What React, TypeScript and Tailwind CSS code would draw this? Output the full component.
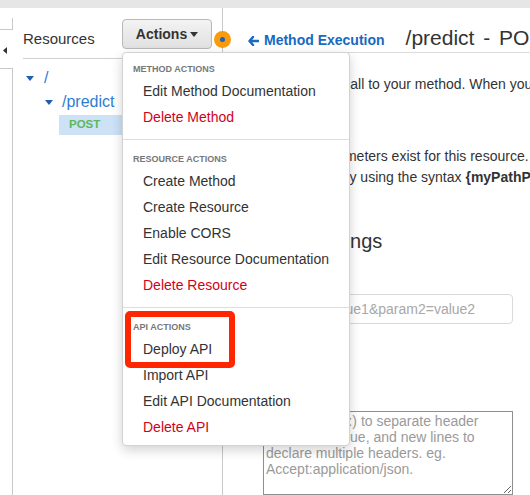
import React from "react";

const font = "font-['Liberation_Sans',Arial,Helvetica,sans-serif]";

interface MenuSection {
  title: string;
  items: { label: string; danger?: boolean }[];
  pad: string;
}

const sections: MenuSection[] = [
  {
    title: "Method Actions",
    pad: "pt-[10px] pb-[9px]",
    items: [{ label: "Edit Method Documentation" }, { label: "Delete Method", danger: true }],
  },
  {
    title: "Resource Actions",
    pad: "pt-[13px] pb-[9px] border-t border-[#dedede]",
    items: [
      { label: "Create Method" },
      { label: "Create Resource" },
      { label: "Enable CORS" },
      { label: "Edit Resource Documentation" },
      { label: "Delete Resource", danger: true },
    ],
  },
  {
    title: "API Actions",
    pad: "pt-[13px] pb-[5px] border-t border-[#dedede]",
    items: [
      { label: "Deploy API" },
      { label: "Import API" },
      { label: "Edit API Documentation" },
      { label: "Delete API", danger: true },
    ],
  },
];

function Caret({ className = "" }: { className?: string }) {
  return (
    <svg width="8" height="5" viewBox="0 0 8 5" className={className}>
      <path d="M0 0h8L4 5z" fill="currentColor" />
    </svg>
  );
}

function ActionsMenu() {
  return (
    <div className="absolute left-[122px] top-[52px] w-[228px] rounded-[4px] border border-[#d2d2d2] bg-white shadow-[0_4px_12px_rgba(0,0,0,0.18)]">
      {sections.map((s) => (
        <div key={s.title} className={s.pad}>
          <div className="mb-[3px] pl-[10px] text-[9px] font-bold uppercase leading-[12px] text-[#777]">
            {s.title}
          </div>
          {s.items.map((it) => (
            <div
              key={it.label}
              className={`flex h-[26px] items-center pl-[20px] text-[14px] ${
                it.danger ? "text-[#d0021b]" : "text-[#333]"
              }`}
            >
              {it.label}
            </div>
          ))}
        </div>
      ))}
    </div>
  );
}

export default function App() {
  return (
    <div className={`relative h-[495px] w-[530px] overflow-hidden bg-white text-[#333] ${font}`}>
      <div className="h-[8px] bg-[#e6e6e6]" />
      <div className="flex h-[487px]">
        {/* collapsed side rail */}
        <div className="flex w-[13px] shrink-0 flex-col">
          <div className="mt-[10px] h-[12px] border-r border-b border-[#c8c8c8]" />
          <div className="flex h-[38px] items-center pl-[3px] pt-[3px] text-[#333]">
            <svg width="4" height="7" viewBox="0 0 4 7">
              <path d="M4 0v7L0 3.5z" fill="currentColor" />
            </svg>
          </div>
          <div className="flex-1 border-r border-t border-[#c8c8c8]" />
        </div>

        {/* resources tree */}
        <div className="flex w-[210px] shrink-0 flex-col border-r border-[#c8c8c8]">
          <div className="ml-[10px] flex h-[51px] items-start justify-between border-b border-[#d0d0d0]">
            <span className="mt-[22px] text-[15px] leading-[18px]">Resources</span>
            <button className="mr-[10px] mt-[11px] flex h-[30px] w-[90px] items-center justify-center gap-[3px] rounded-[4px] border border-[#b8b8b8] bg-linear-to-b from-[#f3f3f3] to-[#e1e1e1] text-[14px] font-bold text-[#333]">
              Actions
              <Caret className="mt-[1px]" />
            </button>
          </div>
          <div className="pl-[13px] pt-[7px] text-[#2f7dd1]">
            <div className="flex h-[24px] items-center">
              <Caret className="text-[#1d5fb0]" />
              <span className="ml-[10px] text-[16px] leading-[18px]">/</span>
            </div>
            <div className="ml-[19px] flex h-[24px] items-center">
              <Caret className="text-[#1d5fb0]" />
              <span className="ml-[9px] text-[16px] leading-[18px]">/predict</span>
            </div>
            <div className="ml-[33px] mt-[1px] flex h-[20px] items-center bg-[#cde2f7] pl-[10px] text-[11.5px] font-bold text-[#5cb85c]">
              POST
            </div>
          </div>
        </div>

        {/* method test */}
        <div className="flex min-w-0 flex-1 flex-col whitespace-nowrap">
          <div className="flex h-[49px] items-baseline border-b border-[#dcdcdc] pl-[25px] pt-[18px]">
            <span className="text-[14px] font-bold text-[#1769c2]">
              <svg width="11" height="10" viewBox="0 0 11 10" className="mr-[5px] inline-block align-[-1px]">
                <path d="M5 1 1.5 5 5 9M2 5h8.5" fill="none" stroke="currentColor" strokeWidth="2.4" strokeLinecap="round" strokeLinejoin="round" />
              </svg>
              Method Execution
            </span>
            <span className="ml-[21px] text-[21px] leading-[23px] text-[#333] [word-spacing:3px]">
              /predict - POST - Method Test
            </span>
          </div>

          <div className="flex flex-col pl-[40px]">
            <p className="ml-[4px] mt-[22px] text-[14px] leading-[18px]">
              Make a test call to your method. When you make a test call, API Gateway skips authorization and directly invokes your method.
            </p>
            <h3 className="-ml-[3px] mt-[13px] text-[20px] leading-[24px]">Path</h3>
            <div className="mt-[16px] text-[14px] leading-[21px]">
              <p className="ml-[1px]">No path parameters exist for this resource. You can define path</p>
              <p className="ml-[4px]">
                parameters by using the syntax <b>{"{myPathParam}"}</b> in a resource path.
              </p>
            </div>
            <h3 className="-ml-[3px] mt-[41px] text-[20px] leading-[24px]">Query Strings</h3>
            <input
              readOnly
              placeholder="param1=value1&param2=value2"
              className="mt-[41px] h-[30px] w-[250px] rounded-[4px] border border-[#d9d9d9] pl-[8px] text-[14px] placeholder:text-[#a8a8a8]"
            />
            <h3 className="-ml-[3px] mt-[40px] text-[20px] leading-[24px]">Headers</h3>
            <textarea
              readOnly
              placeholder="Use a colon (:) to separate header name and value, and new lines to declare multiple headers. eg. Accept:application/json."
              className="mt-[23px] h-[84px] w-[250px] border border-[#8f8f8f] pl-[2px] pt-[1px] text-[14px] leading-[16px] whitespace-normal placeholder:text-[#9a9a9a]"
            />
          </div>
        </div>
      </div>

      {/* status badge next to the actions button */}
      <div className="absolute left-[214px] top-[31px] flex h-[17px] w-[17px] items-center justify-center rounded-full bg-[#f89b0f]">
        <div className="h-[5px] w-[5px] rounded-full bg-[#1f63b6]" />
      </div>

      <ActionsMenu />

      {/* highlight around deploy */}
      <div className="absolute left-[125px] top-[311px] h-[57px] w-[110px] rounded-[5px] border-[6px] border-[#ff2600]" />
    </div>
  );
}
